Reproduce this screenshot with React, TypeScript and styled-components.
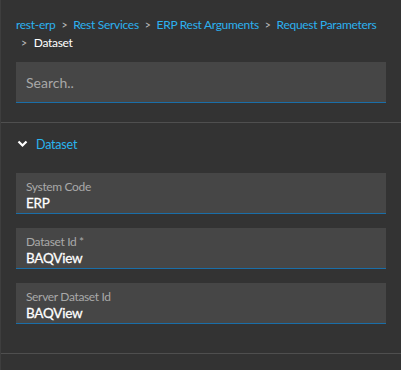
import styled, { createGlobalStyle } from 'styled-components';

const GlobalStyle = createGlobalStyle`
  html, body {
    margin: 0;
    padding: 0;
    background: #333333;
  }
  body {
    font-family: Lato, "Noto Sans", sans-serif;
  }
`;

const Panel = styled.div`
  width: 401px;
  height: 370px;
  box-sizing: border-box;
  background: #333333;
  border-left: 1px solid #3e3e3e;
  overflow: hidden;
`;

const Header = styled.div`
  padding: 16px 15px 19px 15px;
  border-bottom: 1px solid #4f4f4f;
`;

const Crumbs = styled.div`
  font-size: 12px;
  letter-spacing: -0.3px;
  line-height: 18px;
  margin-bottom: 10px;
`;

const CrumbLine = styled.div`
  white-space: nowrap;
`;

const Crumb = styled.span<{ current?: boolean }>`
  color: ${(p) => (p.current ? '#ffffff' : '#2cb1ef')};
`;

const Sep = styled.span<{ lead?: boolean }>`
  color: #bdbdbd;
  margin: ${(p) => (p.lead ? '0 7px 0 5px' : '0 6px')};
  font-size: 10.5px;
`;

const Field = styled.div`
  background: #464646;
  border-bottom: 1px solid #1a6ea8;
  box-sizing: border-box;
`;

const SearchInput = styled.input`
  display: block;
  width: 100%;
  height: 40px;
  box-sizing: border-box;
  border: none;
  outline: none;
  background: transparent;
  padding: 0 10px;
  font-family: inherit;
  font-size: 14px;
  color: #ffffff;

  &::placeholder {
    color: #a8a8a8;
  }
`;

const Section = styled.div`
  padding: 0 15px 29px 15px;
  border-bottom: 1px solid #4f4f4f;
`;

const SectionTitle = styled.div`
  display: flex;
  align-items: center;
  gap: 8px;
  height: 42px;
  padding-left: 1px;
  margin-bottom: 8px;
  color: #2ab4ee;
  font-size: 12.5px;
  letter-spacing: -0.2px;
`;

const Fields = styled.div`
  display: flex;
  flex-direction: column;
  gap: 14px;
`;

const InputBox = styled(Field)`
  height: 41px;
  padding: 6px 10px 0 10px;
`;

const Label = styled.div`
  font-size: 12px;
  letter-spacing: -0.35px;
  line-height: 15px;
  color: #a9a9a9;
`;

const Value = styled.div`
  font-size: 13.5px;
  letter-spacing: -0.25px;
  line-height: 18px;
  font-weight: 400;
  -webkit-text-stroke: 0.3px #ffffff;
  color: #ffffff;
`;

const Chevron = () => (
  <svg width="11" height="8" viewBox="0 0 11 8">
    <path d="M1.5 1.5 L5.5 5.5 L9.5 1.5" fill="none" stroke="#ffffff" strokeWidth="2.2" />
  </svg>
);

const fields = [
  { label: 'System Code', value: 'ERP' },
  { label: 'Dataset Id *', value: 'BAQView' },
  { label: 'Server Dataset Id', value: 'BAQView' },
];

const App = () => {
  return (
    <>
      <GlobalStyle />
      <Panel>
        <Header>
          <Crumbs>
            <CrumbLine>
              <Crumb>rest-erp</Crumb>
              <Sep>&gt;</Sep>
              <Crumb>Rest Services</Crumb>
              <Sep>&gt;</Sep>
              <Crumb>ERP Rest Arguments</Crumb>
              <Sep>&gt;</Sep>
              <Crumb>Request Parameters</Crumb>
            </CrumbLine>
            <CrumbLine>
              <Sep lead>&gt;</Sep>
              <Crumb current>Dataset</Crumb>
            </CrumbLine>
          </Crumbs>
          <Field>
            <SearchInput placeholder="Search.." />
          </Field>
        </Header>
        <Section>
          <SectionTitle>
            <Chevron />
            Dataset
          </SectionTitle>
          <Fields>
            {fields.map((f) => (
              <InputBox key={f.label}>
                <Label>{f.label}</Label>
                <Value>{f.value}</Value>
              </InputBox>
            ))}
          </Fields>
        </Section>
      </Panel>
    </>
  );
};

export default App;
